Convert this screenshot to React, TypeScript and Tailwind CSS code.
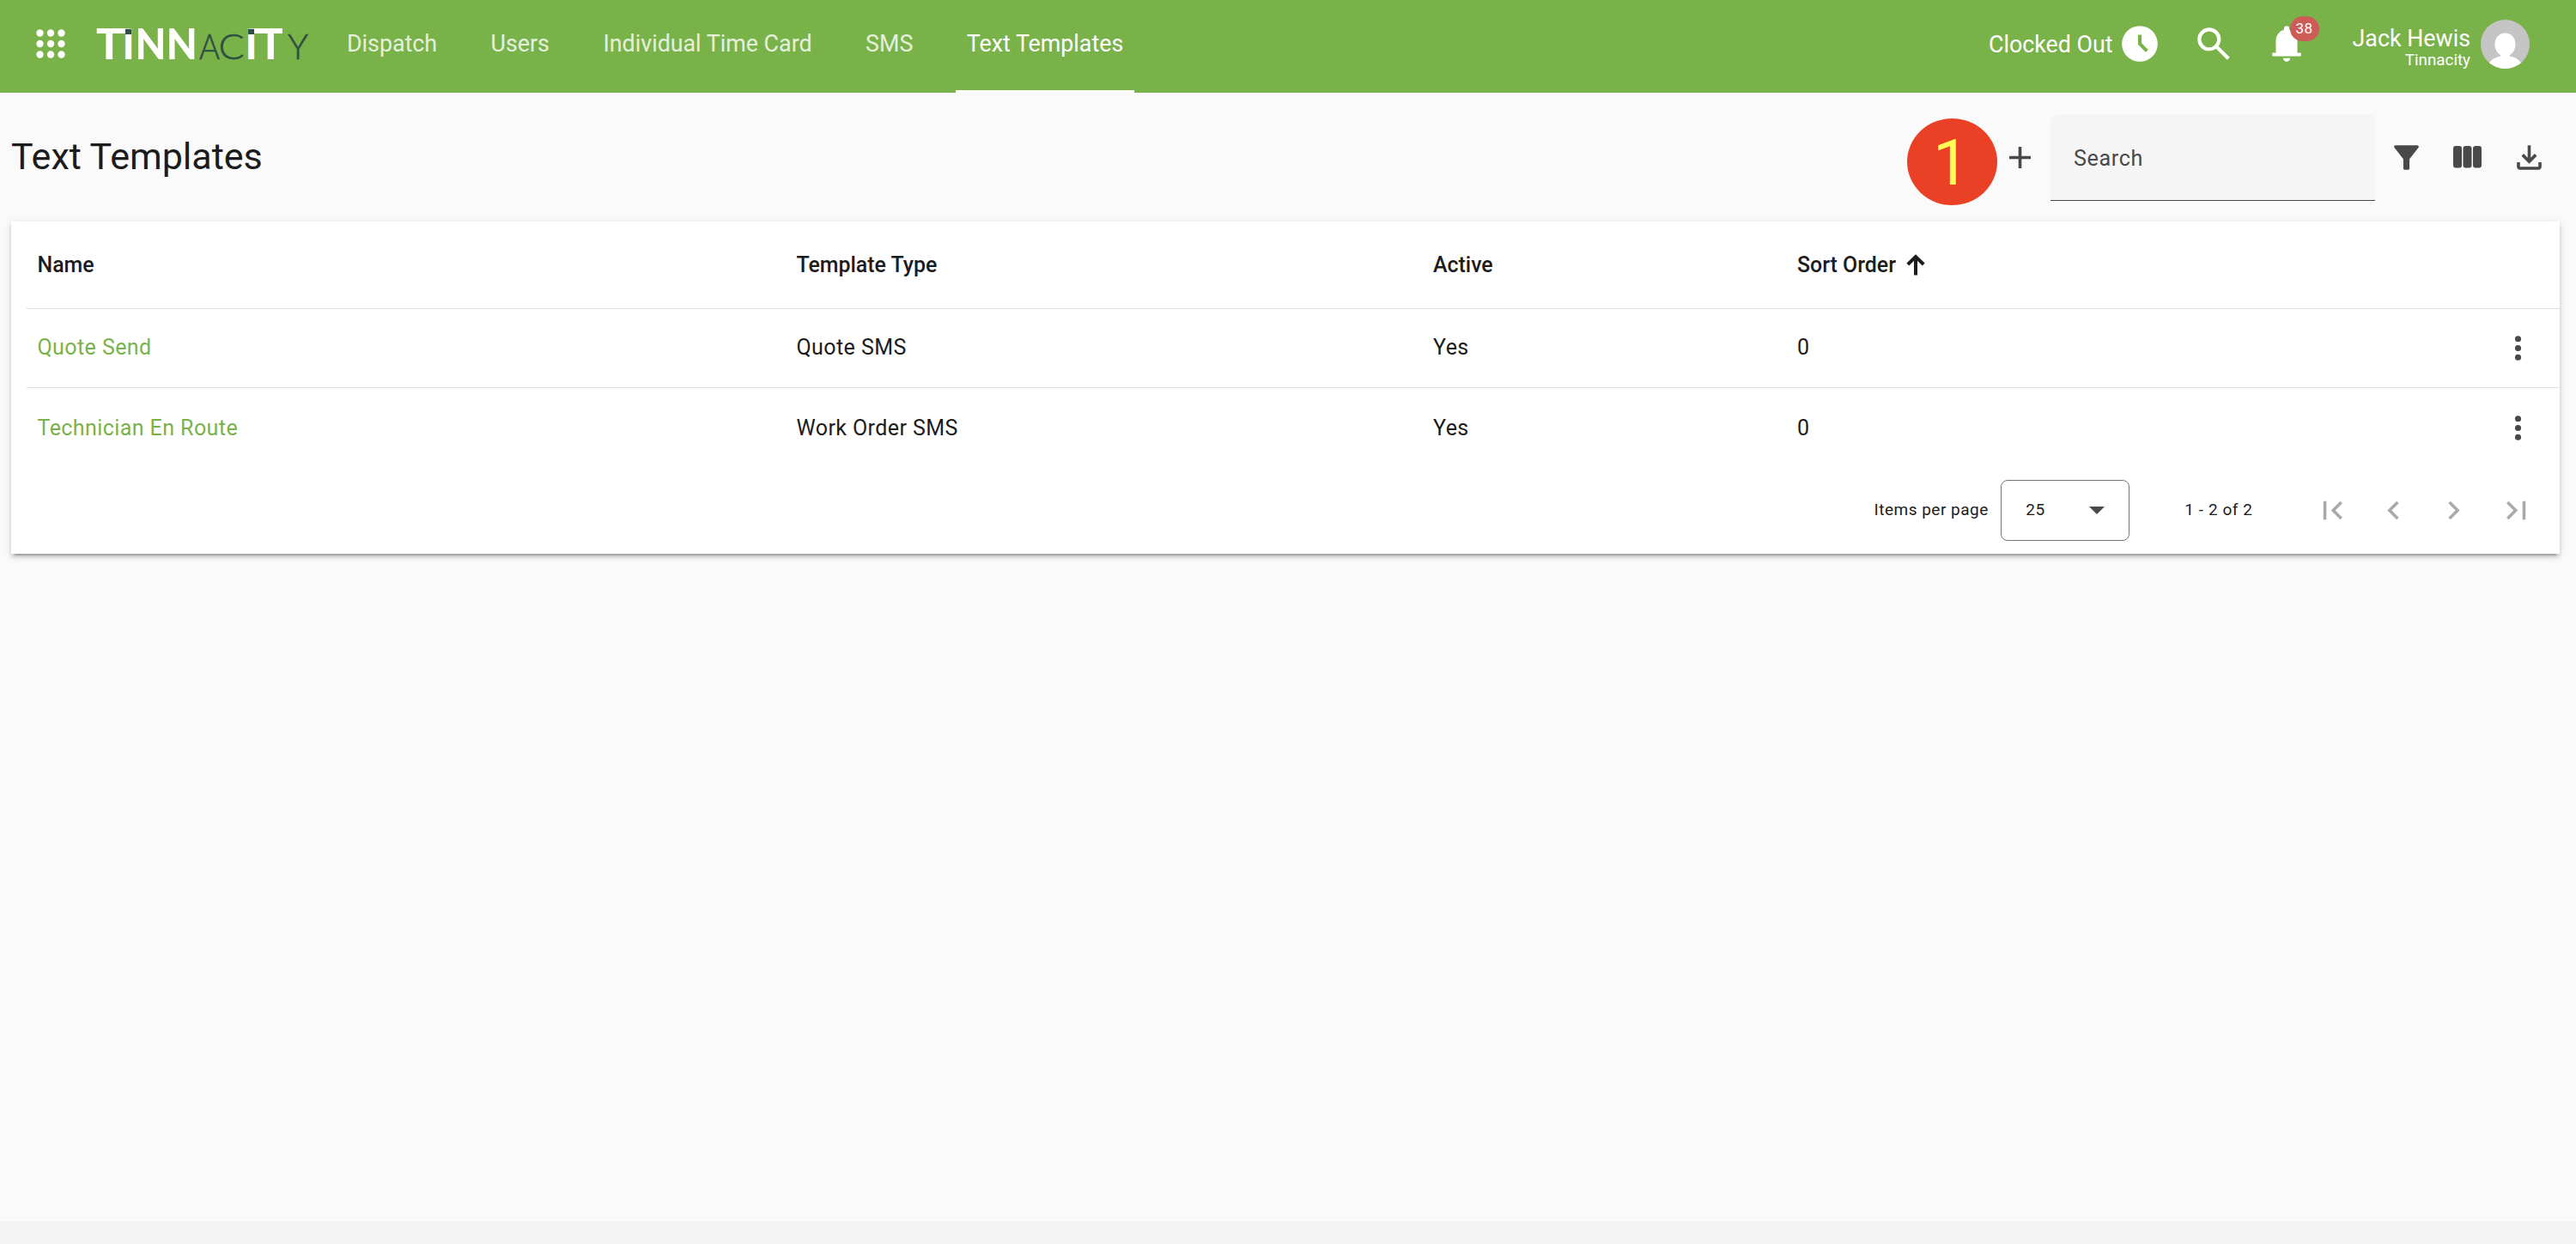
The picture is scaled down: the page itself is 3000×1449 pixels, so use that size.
import { useState } from 'react';
import clsx from 'clsx';

interface Template {
  name: string;
  type: string;
  active: boolean;
  sortOrder: number;
}

const tabs = ['Dispatch', 'Users', 'Individual Time Card', 'SMS', 'Text Templates'];

const templates: Template[] = [
  { name: 'Quote Send', type: 'Quote SMS', active: true, sortOrder: 0 },
  { name: 'Technician En Route', type: 'Work Order SMS', active: true, sortOrder: 0 },
];

const paths = {
  clock: 'm612-292 56-56-148-148v-184h-80v216l172 172ZM480-80q-83 0-156-31.5T197-197q-54-54-85.5-127T80-480q0-83 31.5-156T197-763q54-54 127-85.5T480-880q83 0 156 31.5T763-763q54 54 85.5 127T880-480q0 83-31.5 156T763-197q-54 54-127 85.5T480-80Z',
  search: 'M784-120 532-372q-30 24-69 38t-83 14q-109 0-184.5-75.5T120-580q0-109 75.5-184.5T380-840q109 0 184.5 75.5T640-580q0 44-14 83t-38 69l252 252-56 56ZM380-400q75 0 127.5-52.5T560-580q0-75-52.5-127.5T380-760q-75 0-127.5 52.5T200-580q0 75 52.5 127.5T380-400Z',
  bell: 'M160-200v-80h80v-280q0-83 50-147.5T420-792v-28q0-25 17.5-42.5T480-880q25 0 42.5 17.5T540-820v28q80 20 130 84.5T720-560v280h80v80H160ZM480-80q-33 0-56.5-23.5T400-160h160q0 33-23.5 56.5T480-80Z',
  add: 'M440-440H200v-80h240v-240h80v240h240v80H520v240h-80v-240Z',
  filter: 'M440-160q-17 0-28.5-11.5T400-200v-240L168-736q-15-20-4.5-42t36.5-22h560q26 0 36.5 22t-4.5 42L560-440v240q0 17-11.5 28.5T520-160h-80Z',
  download: 'M480-320 280-520l56-58 104 104v-326h80v326l104-104 56 58-200 200ZM240-160q-33 0-56.5-23.5T160-240v-120h80v120h480v-120h80v120q0 33-23.5 56.5T720-160H240Z',
  firstPage: 'M240-240v-480h80v480h-80Zm440 0L440-480l240-240 56 56-184 184 184 184-56 56Z',
  prevPage: 'M560-240 320-480l240-240 56 56-184 184 184 184-56 56Z',
  nextPage: 'M504-480 320-664l56-56 240 240-240 240-56-56 184-184Z',
  lastPage: 'm280-240-56-56 184-184-184-184 56-56 240 240-240 240Zm360 0v-480h80v480h-80Z',
};

function Icon({ name, className }: { name: keyof typeof paths; className?: string }) {
  return (
    <svg viewBox="0 -960 960 960" className={clsx('shrink-0 fill-current', className)} aria-hidden="true">
      <path d={paths[name]} />
    </svg>
  );
}

function Logo() {
  return (
    <svg width="258" height="70" viewBox="0 -13 258 70" className="shrink-0" role="img" aria-label="Tinnacity">
      <g fill="#fff" fontFamily="Lato, sans-serif" fontWeight="900" fontSize="49.8">
        <text x="2" y="40" textLength="30.5" lengthAdjust="spacingAndGlyphs">T</text>
        <text x="32.7" y="40" textLength="13.6" lengthAdjust="spacingAndGlyphs">I</text>
        <text x="47.4" y="40" textLength="36" lengthAdjust="spacingAndGlyphs">N</text>
        <text x="83.800" y="40" textLength="36" lengthAdjust="spacingAndGlyphs">N</text>
        <text x="175.700" y="40" textLength="13.6" lengthAdjust="spacingAndGlyphs">I</text>
        <text x="191" y="40" textLength="28.5" lengthAdjust="spacingAndGlyphs">T</text>
      </g>
      <path d="M28 3.900h9v6h-9zM185 3.900h9v6h-9z" fill="#fff" />
      <g fill="#2f4f43" stroke="#2f4f43" strokeWidth="0.6" fontFamily="Lato, sans-serif" fontWeight="300" fontSize="41">
        <text x="122" y="40" textLength="24" lengthAdjust="spacingAndGlyphs">A</text>
        <text x="144.500" y="40" textLength="30" lengthAdjust="spacingAndGlyphs">C</text>
        <text x="225" y="40" textLength="24" lengthAdjust="spacingAndGlyphs">Y</text>
      </g>
      <path d="M36 4.700h7v6.300h-7zM179 4.700h7v6.300h-7z" fill="#2f4f43" />
    </svg>
  );
}

function Header() {
  const [activeTab, setActiveTab] = useState('Text Templates');

  return (
    <header className="flex h-[108px] bg-[#7ab24a] text-[26.8px] text-white">
      <div className="flex w-[391.5px] shrink-0 items-center pb-[6px] pl-[34px]">
        <svg width="50" height="50" viewBox="0 0 24 24" className="mr-[26px] shrink-0" fill="currentColor" aria-hidden="true">
          {[6, 12, 18].map(cy => [6, 12, 18].map(cx => <circle key={`${cx}-${cy}`} cx={cx} cy={cy} r="2" />))}
        </svg>
        <Logo />
      </div>

      <nav className="flex gap-[37.5px]">
        {tabs.map(tab => (
          <button
            key={tab}
            onClick={() => setActiveTab(tab)}
            className={clsx(
              'h-full border-b-[3px] px-[12.5px] pb-[2px] whitespace-nowrap',
              tab === activeTab ? 'border-white text-white' : 'border-transparent text-white/80'
            )}
          >
            {tab}
          </button>
        ))}
      </nav>

      <div className="ml-auto flex items-center pr-[54px] pb-[6px]">
        <span className="pt-[2px]">Clocked Out</span>
        <Icon name="clock" className="ml-[6px] size-[50px]" />
        <Icon name="search" className="ml-[36px] size-[50px]" />
        <div className="relative ml-[35px]">
          <Icon name="bell" className="size-[50px]" />
          <span className="absolute top-[-7px] left-[29px] flex h-[29px] w-[34px] items-center justify-center rounded-full bg-[#cd5c56] text-[17px] tracking-[0.4px]">
            38
          </span>
        </div>
        <div className="ml-[52px] pt-[13px] text-right leading-[25px]">
          <p>Jack Hewis</p>
          <p className="text-[18.8px] leading-[25px]">Tinnacity</p>
        </div>
        <svg width="57" height="57" viewBox="0 0 57 57" className="ml-[12px] shrink-0 rounded-full" aria-hidden="true">
          <rect width="57" height="57" fill="#c5c5c5" />
          <path
            d="M28.5 15.500c7 0 12 5.500 12 13 0 5.500-2.500 10-6.500 12.500v1.500c5.500.8 10 3.500 13 7.500V57H10v-7c3-4 7.500-6.700 13-7.500V41c-4-2.500-6.500-7-6.500-12.500 0-7.500 5-13 12-13Z"
            fill="#fff"
          />
        </svg>
      </div>
    </header>
  );
}

function Toolbar() {
  const [search, setSearch] = useState('');

  return (
    <div className="flex h-[150px] items-center pr-[19px] pl-[13px] text-[#494949]">
      <h1 className="mr-auto pb-px text-[43px] text-[#1c1c1c]">Text Templates</h1>
      <button className="relative flex h-[101px] w-[72px] items-center justify-center" aria-label="Add">
        <Icon name="add" className="size-[43px]" />
        <span className="absolute top-[5px] left-[-95px] flex h-[101px] w-[105px] items-center justify-center rounded-[50%] bg-[#ea4126] pt-[3px] pr-[3px] text-[75px] leading-none text-[#ffff54]">
          1
        </span>
      </button>
      <input
        type="text"
        placeholder="Search"
        value={search}
        onChange={e => setSearch(e.target.value)}
        className="h-[101px] w-[378px] rounded-t-[8px] border-b border-[#494949] bg-[#f5f5f5] px-[27px] pt-[3px] text-[25.200px] tracking-[0.6px] placeholder:text-[#494949] focus:outline-none"
      />
      <button className="flex w-[72px] justify-center" aria-label="Filter">
        <Icon name="filter" className="size-[43px]" />
      </button>
      <button className="flex w-[71px] justify-center" aria-label="Columns">
        <svg width="33" height="26" viewBox="0 0 33 26" fill="currentColor" aria-hidden="true">
          <rect width="10" height="25.500" rx="3" />
          <rect x="11.500" width="10" height="25.500" rx="3" />
          <rect x="23" width="10" height="25.500" rx="3" />
        </svg>
      </button>
      <button className="flex w-[72px] justify-center" aria-label="Download">
        <Icon name="download" className="size-[43px]" />
      </button>
    </div>
  );
}

function Pagination() {
  return (
    <div className="flex h-[100px] items-center pr-[15px] pb-px text-[19px] tracking-[0.5px]">
      <span className="ml-auto">Items per page</span>
      <button className="ml-[14.5px] flex h-[71px] w-[150px] items-center justify-between rounded-[8px] border border-[#757575] px-[28px]">
        25
        <svg width="18" height="9" viewBox="0 0 18 9" fill="#494949" aria-hidden="true">
          <path d="M0 0h18L9 9z" />
        </svg>
      </button>
      <span className="mr-[57px] ml-[64px] tracking-[0.55px]">1 - 2 of 2</span>
      <div className="flex text-[#a9a9a9]">
        {(['firstPage', 'prevPage', 'nextPage', 'lastPage'] as const).map(name => (
          <button key={name} className="flex w-[71.4px] justify-center" aria-label={name} disabled>
            <Icon name={name} className="size-[43px]" />
          </button>
        ))}
      </div>
    </div>
  );
}

function TemplateTable() {
  return (
    <section className="mr-[19px] ml-[13px] h-[387px] bg-white text-[#1c1c1c] shadow-[0_6px_2px_-4px_rgba(0,0,0,0.2),0_4px_4px_rgba(0,0,0,0.14),0_2px_10px_rgba(0,0,0,0.12)]">
      <div className="ml-[18px]">
        <div className="grid h-[102px] grid-cols-[884px_741.5px_424px_1fr] items-center border-b border-[#dfdfdf] pl-[12.5px] text-[24.9px] font-medium">
          <span>Name</span>
          <span>Template Type</span>
          <span>Active</span>
          <span className="flex items-center">
            Sort Order
            <svg width="22" height="25" viewBox="0 0 22 25" className="ml-[12px]" fill="none" stroke="currentColor" strokeWidth="4" aria-hidden="true">
              <path d="M11 24.500V3M1.800 12 11 3l9.200 9" />
            </svg>
          </span>
        </div>
        {templates.map((t, i) => (
          <div
            key={t.name}
            className={clsx(
              'grid grid-cols-[884px_741.5px_424px_1fr_43px] items-center pr-[27px] pl-[12.5px] text-[25px] tracking-[0.42px]',
              i < templates.length - 1 ? 'h-[92px] border-b border-[#dfdfdf] pb-px' : 'h-[93px]'
            )}
          >
            <a href="#" className="text-[#7ab24a]">{t.name}</a>
            <span>{t.type}</span>
            <span>{t.active ? 'Yes' : 'No'}</span>
            <span>{t.sortOrder}</span>
            <svg width="43" height="43" viewBox="0 0 24 24" fill="#494949" aria-hidden="true">
              <circle cx="12" cy="6" r="2" />
              <circle cx="12" cy="12" r="2" />
              <circle cx="12" cy="18" r="2" />
            </svg>
          </div>
        ))}
      </div>
      <Pagination />
    </section>
  );
}

export default function App() {
  return (
    <div className="flex h-[1449px] flex-col bg-[#fafafa] font-[Roboto,sans-serif]">
      <Header />
      <Toolbar />
      <TemplateTable />
      <footer className="mt-auto h-[26px] bg-[#f4f4f4]" />
    </div>
  );
}
